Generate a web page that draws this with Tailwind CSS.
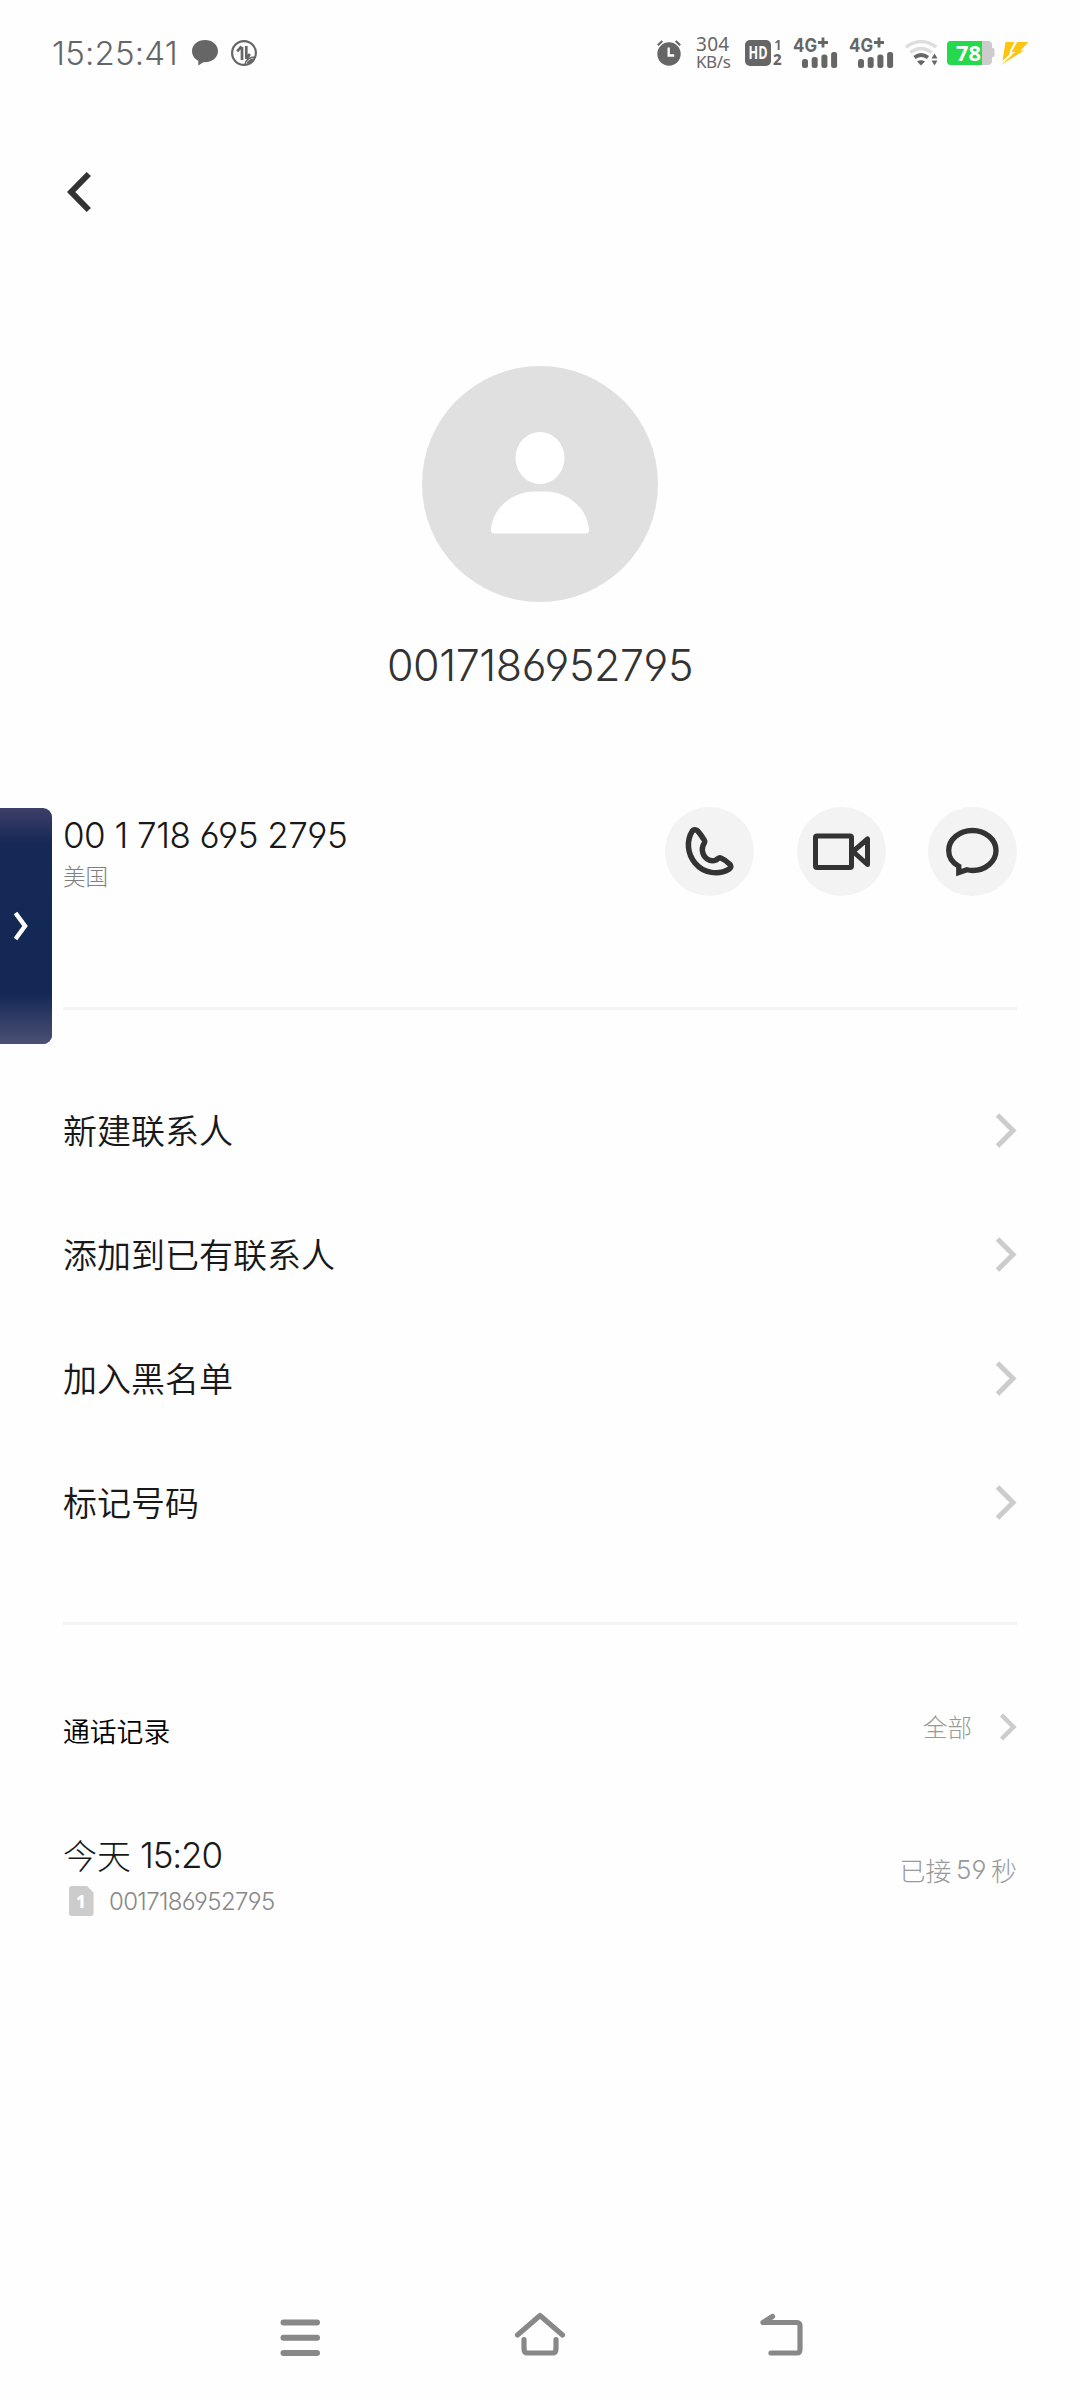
<!DOCTYPE html>
<html lang="zh-CN">
<head>
<meta charset="utf-8">
<title>0017186952795</title>
<script src="https://cdn.jsdelivr.net/npm/@tailwindcss/browser@4"></script>
</head>
<body class="bg-[#fefefe]">
<div class="relative flex h-[2400px] w-[1080px] flex-col overflow-hidden bg-[#fefefe] font-['Noto_Sans_CJK_SC',sans-serif] text-[#181818]">

  <!-- Status bar -->
  <header class="flex h-[106px] items-center pl-[52px] text-[#666]">
    <div class="w-[140px] whitespace-nowrap font-['Inter',sans-serif] text-[33px] font-light leading-[40px] tracking-[0.2px] [font-feature-settings:'cv03','cv04']">15:25:41</div>
    <svg class="h-[26px] w-[26px] shrink-0" viewBox="0 0 26 26" fill="#666"><path d="M13 0C5.700 0 0 4.800 0 11c0 4.300 2.500 7.800 6.300 9.700V25.500l5-3.300C19.500 22.600 26 18 26 11 26 4.800 20.300 0 13 0z"/></svg>
    <svg class="ml-[13px] h-[26px] w-[26px] shrink-0" viewBox="0 0 26 26" fill="none" stroke="#666"><circle cx="13" cy="13" r="11.900" stroke-width="2.200"/><path d="M11 20V7M6.200 11.300 10.500 6.300M15.300 6v13M15.800 18.500l3-4.500" stroke-width="2.700"/><path d="M14 24.500c1-5.500 4-7.500 10.500-7.500" stroke-width="1.500"/><path d="M16 23c1.500-3 4-4 7.500-4l-3 3.500z" fill="#666" stroke-width="1"/></svg>
    <svg class="ml-[400px] h-[26px] w-[24px] shrink-0" viewBox="0 0 24 26"><circle cx="12" cy="14" r="11.700" fill="#666"/><path d="M.8 5.200 5.300 1M23.200 5.200 18.700 1" stroke="#666" stroke-width="2.200"/><path d="M11.700 7.500v8h5.500" fill="none" stroke="#fefefe" stroke-width="2.300"/></svg>
    <div class="ml-[15px] flex w-[49px] flex-col font-['Noto_Sans',sans-serif] leading-[18px]">
      <span class="text-[19px] tracking-[0.3px]">304</span><span class="text-[17px] tracking-[-0.4px]">KB/s</span>
    </div>
    <svg class="h-[34px] w-[38px] shrink-0 overflow-visible" viewBox="0 -2 38 34" fill="#666"><rect y="2" width="26" height="26" rx="5"/><text x="13" y="21" text-anchor="middle" textLength="19" lengthAdjust="spacingAndGlyphs" fill="#fefefe" font-family="Open Sans" font-weight="700" font-size="17">HD</text><text x="29" y="12" font-family="Noto Sans" font-weight="600" font-size="14">1</text><text x="28" y="27" font-family="Noto Sans" font-weight="800" font-size="15">2</text></svg>
    <svg class="ml-[10px] h-[40px] w-[45px] shrink-0 overflow-visible" viewBox="0 -4 45 40" fill="#666"><text x="0" y="15" textLength="24" lengthAdjust="spacingAndGlyphs" font-family="Inter" font-weight="700" font-size="19">4G</text><path d="M25 5.500h10M30 .5v10" stroke="#666" stroke-width="2.800"/><rect x="9" y="22" width="6" height="9" rx="2.500"/><rect x="18.700" y="20" width="6" height="11" rx="2.500"/><rect x="28.400" y="17.500" width="6" height="13.500" rx="2.500"/><rect x="38.100" y="15" width="6" height="16" rx="2.500"/></svg>
    <svg class="ml-[11px] h-[40px] w-[45px] shrink-0 overflow-visible" viewBox="0 -4 45 40" fill="#666"><text x="0" y="15" textLength="24" lengthAdjust="spacingAndGlyphs" font-family="Inter" font-weight="700" font-size="19">4G</text><path d="M25 5.500h10M30 .5v10" stroke="#666" stroke-width="2.800"/><rect x="9" y="22" width="6" height="9" rx="2.500"/><rect x="18.700" y="20" width="6" height="11" rx="2.500"/><rect x="28.400" y="17.500" width="6" height="13.500" rx="2.500"/><rect x="38.100" y="15" width="6" height="16" rx="2.500"/></svg>
    <svg class="ml-[11px] h-[26px] w-[33px] shrink-0" viewBox="0 0 33 26" fill="none"><path d="M.8 7.200Q16 -4 31.200 7.200M5.300 12.500Q16 4.500 26.700 12.500" stroke="#ddd" stroke-width="3.400"/><path d="M9.500 17.500Q16 12.500 23 17.500" stroke="#666" stroke-width="3.800"/><path d="M12 21.500q4-2.500 8 0l-4 4zM26.500 18.500l3-5 3 5zM26.500 20.500l3 5 3-5z" fill="#666"/></svg>
    <svg class="ml-[9px] h-[24px] w-[48px] shrink-0 overflow-visible" viewBox="0 0 48 24"><rect width="45" height="24" rx="4" fill="#ccc"/><rect x="44" y="7" width="3.500" height="9" rx="1.500" fill="#ccc"/><path d="M4 0h31v24H4a4 4 0 0 1-4-4V4a4 4 0 0 1 4-4z" fill="#26d84b"/><text x="9" y="20" textLength="25" lengthAdjust="spacingAndGlyphs" fill="#fff" font-family="Noto Sans" font-weight="700" font-size="21">78</text></svg>
    <svg class="ml-[6px] h-[23px] w-[28px] shrink-0" viewBox="0 0 28 23" fill="#fdc50f"><path d="M4.500 0h9L8.500 9.500h3L1.500 19z"/><path d="M15.500 0h12l-8 8.500H23L0 23l10.500-9.500 2-2-3-.5z" /><path d="M15.500 0 9 11.500l5-1.500" fill="none" stroke="#fefefe" stroke-width="1.200"/></svg>
  </header>

  <!-- Title bar -->
  <nav class="flex h-[172px] items-center pl-[67px]">
    <svg class="h-[42px] w-[26px]" viewBox="0 0 26 42" fill="none"><path d="M21.800 3 4.200 21l17.600 18" stroke="#333" stroke-width="6"/></svg>
  </nav>

  <!-- Contact identity -->
  <section class="flex flex-col items-center pt-[88px]">
    <svg class="size-[236px]" viewBox="0 0 236 236"><circle cx="118" cy="118" r="118" fill="#e0e0e0"/><rect x="93.500" y="66" width="49" height="52" rx="24.500" ry="26" fill="#fff"/><path d="M72.500 167.500q-4 0-3.500-4.500C71 142 90 125.500 113 125.500h10c23 0 42 16.500 44 37.500q.5 4.500-3.500 4.500z" fill="#fff"/></svg>
    <h1 class="mt-[38px] font-['Inter',sans-serif] text-[43px] font-light leading-[50px] tracking-[-0.430px] text-[#333] [font-feature-settings:'cv03','cv04']">0017186952795</h1>
  </section>

  <!-- Phone number and call actions -->
  <section class="mx-[63px] mt-[117px] flex h-[203px] items-start border-b-[3px] border-[#f3f3f3]">
    <div class="flex-1">
      <div class="mt-[8px] font-['Inter',sans-serif] text-[35px] font-light leading-[40px] tracking-[-0.520px] [font-feature-settings:'cv03','cv04']">00 1 718 695 2795</div>
      <div class="mt-[4px] text-[22.500px] font-light leading-[32px] text-[#808080]">美国</div>
    </div>
    <div class="flex gap-[42.500px]">
      <button class="size-[89px] rounded-full bg-[#f3f3f3]"><svg class="size-[89px]" viewBox="0 0 89 89" fill="none" stroke="#333" stroke-width="5.500" stroke-linejoin="round"><path d="M27.500 23.800C21 34 22.500 47 30 56c8.500 10.500 23.500 12.500 34.500 5.800 1.800-1.200 1.800-3 .3-4.500-2.500-2.700-5.500-4.800-9-6.300-2-.8-3 1-4.800 2-6 2.500-13-2-13.700-10-.3-3 .8-5 2.200-7.500.8-1.500-.3-2.500-1.300-4-1.500-2.500-3.200-5-5.200-7.200-1.800-1.800-4-2.300-5.500-.5z"/></svg></button>
      <button class="size-[89px] rounded-full bg-[#f3f3f3]"><svg class="size-[89px]" viewBox="0 0 89 89" fill="none" stroke="#333" stroke-width="5" stroke-linejoin="round"><rect x="18.500" y="29" width="36" height="31.500" rx="1.500"/><path d="M56 44.500 70.500 32v25.500z"/></svg></button>
      <button class="size-[89px] rounded-full bg-[#f3f3f3]"><svg class="size-[89px]" viewBox="0 0 89 89" fill="none" stroke="#333" stroke-width="5.300"><path d="M30.800 59.300C24.500 55.800 20.700 50 20.700 43.500c0-11 10.500-20 23.700-20S68 32.500 68 43.500 57.500 63.500 44.400 63.500c-2 0-3.500-.2-5.500-.7l-8.100 2.700z"/></svg></button>
    </div>
  </section>

  <!-- Actions -->
  <ul class="mx-[63px] flex h-[615px] flex-col border-b-[3px] border-[#f3f3f3] pt-[58px] text-[34px] font-[350]">
    <li class="flex h-[124px] items-center justify-between"><span class="leading-[50px]">新建联系人</span><svg class="h-[35px] w-[22px]" viewBox="0 0 22 35" fill="none"><path d="M2.500 2 18 17.500 2.500 33" stroke="#ccc" stroke-width="5"/></svg></li>
    <li class="flex h-[124px] items-center justify-between"><span class="leading-[50px]">添加到已有联系人</span><svg class="h-[35px] w-[22px]" viewBox="0 0 22 35" fill="none"><path d="M2.500 2 18 17.500 2.500 33" stroke="#ccc" stroke-width="5"/></svg></li>
    <li class="flex h-[124px] items-center justify-between"><span class="leading-[50px]">加入黑名单</span><svg class="h-[35px] w-[22px]" viewBox="0 0 22 35" fill="none"><path d="M2.500 2 18 17.500 2.500 33" stroke="#ccc" stroke-width="5"/></svg></li>
    <li class="flex h-[124px] items-center justify-between"><span class="leading-[50px]">标记号码</span><svg class="h-[35px] w-[22px]" viewBox="0 0 22 35" fill="none"><path d="M2.500 2 18 17.500 2.500 33" stroke="#ccc" stroke-width="5"/></svg></li>
  </ul>

  <!-- Call log -->
  <section class="mx-[63px] flex flex-1 flex-col pt-[82px]">
    <div class="flex h-[40px] items-center justify-between">
      <h2 class="mt-[8px] text-[26.800px] font-[350] leading-[40px] text-black">通话记录</h2>
      <div class="flex items-center text-[24.500px] font-light leading-[36px] text-[#999]">全部<svg class="ml-[27px] h-[28px] w-[18px]" viewBox="0 0 18 28" fill="none"><path d="M2.500 2 14.500 14 2.500 26" stroke="#ccc" stroke-width="4.500"/></svg></div>
    </div>
    <div class="mt-[83px] flex items-start justify-between">
      <div>
        <div class="flex h-[50px] items-center"><span class="text-[34px] font-light leading-[50px]">今天</span><span class="ml-[9px] font-['Inter',sans-serif] text-[35px] font-light leading-[50px] tracking-[-1.100px]">15:20</span></div>
        <div class="mt-[1px] flex h-[40px] items-center">
          <svg class="ml-[6px] h-[30px] w-[25px]" viewBox="0 0 25 30"><path d="M3 0h15l6.500 6.500V27a3 3 0 0 1-3 3H3a3 3 0 0 1-3-3V3a3 3 0 0 1 3-3z" fill="#ccc"/><text x="12" y="21.500" text-anchor="middle" fill="#fff" font-family="Noto Sans" font-weight="800" font-size="17">1</text></svg>
          <span class="ml-[15px] mt-[2px] font-['Inter',sans-serif] text-[24px] font-light leading-[32px] tracking-[-0.650px] text-[#888] [font-feature-settings:'cv03','cv04']">0017186952795</span>
        </div>
      </div>
      <div class="mt-[20px] flex items-center text-[26px] font-light leading-[40px] text-[#999]">已接<span class="mx-[4.500px] font-['Inter',sans-serif] [font-feature-settings:'cv03','cv04']">59</span>秒</div>
    </div>
  </section>

  <!-- System navigation -->
  <footer class="flex h-[126px] items-center justify-between pl-[280px] pr-[277px]">
    <svg class="h-[50px] w-[40px]" viewBox="0 0 40 50" stroke="#888" stroke-width="6" stroke-linecap="round"><path d="M3.500 10.500h33.500M3.500 25.700h33.500M3.500 41h33.500"/></svg>
    <svg class="h-[50px] w-[52px]" viewBox="0 0 52 50" fill="none" stroke="#888" stroke-width="5.200" stroke-linecap="round" stroke-linejoin="round"><path d="M3.500 23 26 3.500 48.500 23M10 27.500v9q0 4.500 3.500 4.500h25q3.500 0 3.500-4.500v-9"/></svg>
    <svg class="h-[50px] w-[43px]" viewBox="0 0 43 50" fill="none" stroke="#888" stroke-width="5.200" stroke-linecap="round" stroke-linejoin="round"><path d="M12.500 4.500 3 10.500h34q3 0 3 4v22.500q0 4-3 4H11"/></svg>
  </footer>

  <!-- Floating side drawer handle -->
  <aside class="absolute left-0 top-[808px] flex h-[236px] w-[52px] items-center overflow-hidden rounded-r-[9px] bg-linear-to-b from-[#3d3f68] via-[#152856] via-15% to-[#132855]">
    <div class="absolute inset-x-0 bottom-0 h-[50px] bg-linear-to-b from-transparent to-[#4c5076]"></div>
    <svg class="ml-[13px] h-[30px] w-[16px]" viewBox="0 0 16 30" fill="none"><path d="M2.500 2 12 15 2.500 28" stroke="#fff" stroke-width="4.500"/></svg>
  </aside>
</div>
</body>
</html>
